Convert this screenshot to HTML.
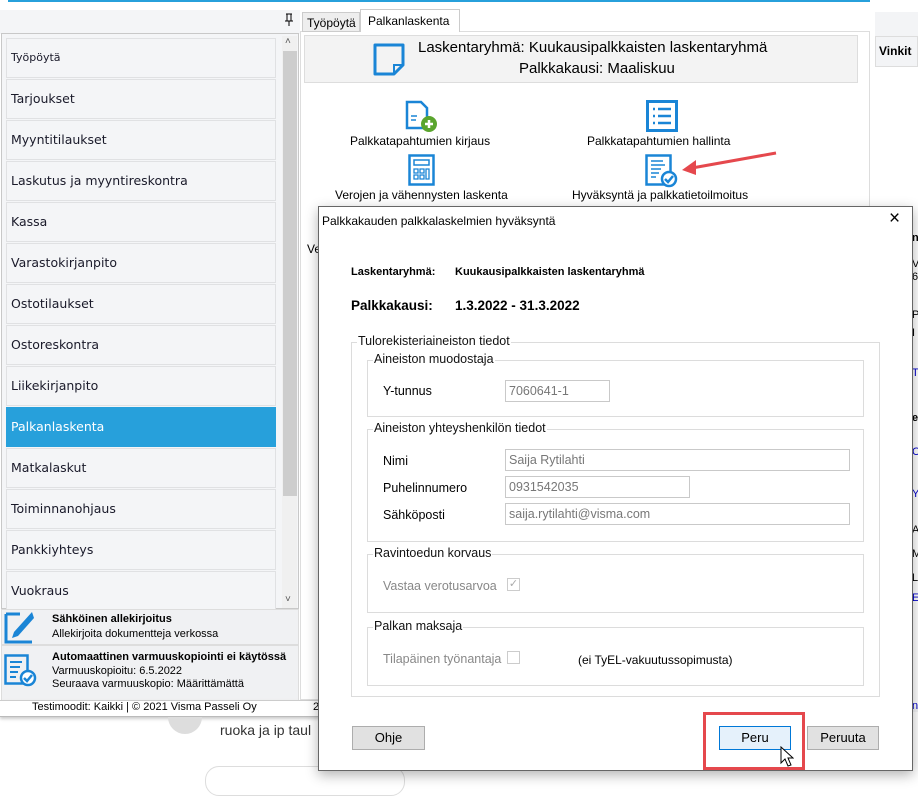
<!DOCTYPE html>
<html><head><meta charset="utf-8"><style>
*{box-sizing:border-box;margin:0;padding:0}
body{width:918px;height:776px;position:relative;overflow:hidden;background:#fff;font-family:"Liberation Sans",Arial,sans-serif;font-size:13px;color:#000}
.a{position:absolute}
.item{position:absolute;left:6px;width:270px;height:40px;background:#f4f5f7;border:1px solid #e0e1e3;font-family:"DejaVu Sans",sans-serif;font-size:12.5px;color:#1a1a2a;padding-left:4px;line-height:38px}
.sel{background:#27a0db;color:#fff;border-color:#27a0db}
fieldset{position:absolute;border:1px solid #dcdcdc;}
.lg{position:absolute;background:#fff;padding:0 1px;font-size:12.5px;color:#111}
.inp{position:absolute;border:1px solid #c9c9c9;height:22px;font-size:12.5px;color:#777;padding-left:3px;line-height:20px;background:#fff}
.btn{position:absolute;height:24px;background:#e1e1e1;border:1px solid #adadad;font-size:13px;text-align:center;line-height:22px}
</style></head><body>
<div class="a" style="left:8px;top:0;width:862px;height:2px;background:#27a0db"></div>
<!-- sidebar -->
<div class="a" style="left:0;top:10px;width:300px;height:24px;background:#f4f5f7"></div>
<svg class="a" style="left:284px;top:13px" width="10" height="14"><path d="M2 1h6M3 1v7M7 1v7M1 8h8M5 8v5" stroke="#000" stroke-width="1" fill="none"/></svg>
<div class="a" style="left:1px;top:33px;width:298px;height:576px;border:1px solid #c8c8c8;background:#f4f5f7"></div>
<div class="item" style="top:38px;font-size:11px">Työpöytä</div>
<div class="item" style="top:79px">Tarjoukset</div>
<div class="item" style="top:120px">Myyntitilaukset</div>
<div class="item" style="top:161px">Laskutus ja myyntireskontra</div>
<div class="item" style="top:202px">Kassa</div>
<div class="item" style="top:243px">Varastokirjanpito</div>
<div class="item" style="top:284px">Ostotilaukset</div>
<div class="item" style="top:325px">Ostoreskontra</div>
<div class="item" style="top:366px">Liikekirjanpito</div>
<div class="item sel" style="top:407px">Palkanlaskenta</div>
<div class="item" style="top:448px">Matkalaskut</div>
<div class="item" style="top:489px">Toiminnanohjaus</div>
<div class="item" style="top:530px">Pankkiyhteys</div>
<div class="item" style="top:571px">Vuokraus</div>
<div class="a" style="left:282px;top:36px;width:15px;height:572px;background:#f0f0f0"></div>
<div class="a" style="left:283px;top:51px;width:14px;height:445px;background:#cdcdcd"></div>
<div class="a" style="left:285px;top:36px;font-size:10px;color:#555">&#x2C4;</div>
<div class="a" style="left:285px;top:594px;font-size:10px;color:#555">&#x2C5;</div>
<div class="a" style="left:1px;top:609px;width:298px;height:36px;background:#f0f1f3;border:1px solid #ddd"></div>
<svg class="a" style="left:4px;top:610px" width="30" height="34"><path d="M2 4h14M2 4v28h26" stroke="#1a85d6" stroke-width="3" fill="none"/><path d="M28 2 L10 22 L8 28 L14 26 L30 8Z" fill="#1a85d6"/></svg>
<div class="a" style="left:52px;top:613px;font-size:11px;font-weight:bold">Sähköinen allekirjoitus</div>
<div class="a" style="left:52px;top:628px;font-size:11px">Allekirjoita dokumentteja verkossa</div>
<div class="a" style="left:1px;top:645px;width:298px;height:56px;background:#f0f1f3;border:1px solid #ddd"></div>
<svg class="a" style="left:4px;top:654px" width="34" height="34"><rect x="1.5" y="1.5" width="22" height="28" fill="none" stroke="#1a85d6" stroke-width="2.5"/><path d="M6 8h12M6 13h10M6 18h8M6 23h6" stroke="#1a85d6" stroke-width="2"/><circle cx="24" cy="24" r="7" fill="#fff" stroke="#1a85d6" stroke-width="2.5"/><path d="M20 24l3 3 5-6" stroke="#1a85d6" stroke-width="2.5" fill="none"/></svg>
<div class="a" style="left:52px;top:651px;font-size:11px;font-weight:bold">Automaattinen varmuuskopiointi ei käytössä</div>
<div class="a" style="left:52px;top:665px;font-size:11px">Varmuuskopioitu: 6.5.2022</div>
<div class="a" style="left:52px;top:678px;font-size:11px">Seuraava varmuuskopio: Määrittämättä</div>
<div class="a" style="left:0;top:700px;width:320px;height:17px;background:#fff;border-top:1px solid #ccc;border-bottom:1px solid #bbb;box-shadow:0 2px 3px #ccc"></div>
<div class="a" style="left:32px;top:701px;font-size:11px">Testimoodit: Kaikki | © 2021 Visma Passeli Oy</div>
<div class="a" style="left:313px;top:701px;font-size:11px">2</div>
<div class="a" style="left:168px;top:717px;width:34px;height:17px;border-radius:0 0 17px 17px;background:#ddd"></div>
<div class="a" style="left:220px;top:722px;font-size:14px;color:#333">ruoka ja ip taul</div>
<div class="a" style="left:205px;top:766px;width:200px;height:30px;border:1px solid #ddd;border-radius:14px"></div>
<!-- main -->
<div class="a" style="left:300px;top:31px;width:570px;height:669px;border:1px solid #ddd;background:#fff"></div>
<div class="a" style="left:302px;top:12px;width:58px;height:20px;background:#eee;border:1px solid #ccc;font-size:12px;padding:3px 4px">Työpöytä</div>
<div class="a" style="left:360px;top:9px;width:100px;height:23px;background:#fff;border:1px solid #ccc;border-bottom:none;font-size:12px;padding:4px 7px">Palkanlaskenta</div>
<div class="a" style="left:304px;top:35px;width:554px;height:48px;background:#f3f3f3;border:1px solid #ddd"></div>
<svg class="a" style="left:372px;top:42px" width="36" height="34"><path d="M3 3h28v20l-9 9H3Z" fill="none" stroke="#1a85d6" stroke-width="3" stroke-linejoin="round"/><path d="M31 23h-9v9" fill="none" stroke="#1a85d6" stroke-width="2"/></svg>
<div class="a" style="left:418px;top:39px;font-size:15px">Laskentaryhmä: Kuukausipalkkaisten laskentaryhmä</div>
<div class="a" style="left:519px;top:60px;font-size:15px">Palkkakausi: Maaliskuu</div>
<svg class="a" style="left:405px;top:100px" width="34" height="34"><path d="M2 2h14l6 6v20H2Z" fill="none" stroke="#1a85d6" stroke-width="2.5"/><path d="M6 16h6M6 20h5" stroke="#1a85d6" stroke-width="1.5"/><circle cx="24" cy="24" r="8" fill="#5aa52e"/><path d="M20 24h8M24 20v8" stroke="#fff" stroke-width="2.5"/></svg>
<div class="a" style="left:350px;top:134px;font-size:12px">Palkkatapahtumien kirjaus</div>
<svg class="a" style="left:646px;top:100px" width="34" height="34"><rect x="1.5" y="1.5" width="29" height="29" fill="none" stroke="#1a85d6" stroke-width="3"/><path d="M7 9h2M12 9h13M7 16h2M12 16h13M7 23h2M12 23h13" stroke="#1a85d6" stroke-width="2.5"/></svg>
<div class="a" style="left:587px;top:134px;font-size:12px">Palkkatapahtumien hallinta</div>
<svg class="a" style="left:408px;top:154px" width="30" height="34"><rect x="1.5" y="1.5" width="24" height="29" fill="none" stroke="#1a85d6" stroke-width="2.5"/><rect x="6" y="6" width="15" height="5" fill="none" stroke="#1a85d6" stroke-width="1.5"/><path d="M6 15h4v4H6zM12 15h4v4h-4zM18 15h3v10h-3zM6 21h4v4H6zM12 21h4v4h-4z" fill="none" stroke="#1a85d6" stroke-width="1.3"/></svg>
<div class="a" style="left:335px;top:188px;font-size:12px">Verojen ja vähennysten laskenta</div>
<svg class="a" style="left:645px;top:154px" width="34" height="34"><rect x="1.5" y="1.5" width="24" height="29" fill="#fff" stroke="#1a85d6" stroke-width="2.5"/><path d="M6 7h12M6 11h14M6 15h10M6 19h8M6 23h5" stroke="#1a85d6" stroke-width="1.5"/><circle cx="24" cy="25" r="7" fill="#fff" stroke="#1a85d6" stroke-width="2.5"/><path d="M20 25l3 3 5-6" stroke="#1a85d6" stroke-width="2.5" fill="none"/></svg>
<svg class="a" style="left:680px;top:148px" width="100" height="30"><path d="M96 5 L12 20" stroke="#e5484d" stroke-width="3"/><path d="M2 22 L16 12 L16 27Z" fill="#e5484d"/></svg>
<div class="a" style="left:572px;top:188px;font-size:12px">Hyväksyntä ja palkkatietoilmoitus</div>
<div class="a" style="left:307px;top:242px;font-size:12px">Ve</div>
<!-- right -->
<div class="a" style="left:875px;top:12px;width:43px;height:700px;background:#f3f4f6"></div>
<div class="a" style="left:875px;top:36px;width:43px;height:31px;border:1px solid #ddd;background:#f3f4f6;font-weight:bold;font-size:12px;padding:7px 3px">Vinkit</div>
<div class="a" style="left:875px;top:67px;width:43px;height:640px;background:#fff"></div>
<div class="a" style="left:912px;top:232px;font-size:11px;font-weight:bold">n</div>
<div class="a" style="left:912px;top:258px;font-size:11px;line-height:13px">V<br>6</div>
<div class="a" style="left:912px;top:306px;font-size:11px;line-height:18px">P<br>I</div>
<div class="a" style="left:912px;top:367px;font-size:11px;color:#00c">T</div>
<div class="a" style="left:912px;top:412px;font-size:11px;font-weight:bold">e</div>
<div class="a" style="left:912px;top:446px;font-size:11px;color:#00c">C</div>
<div class="a" style="left:912px;top:488px;font-size:11px;color:#00c">Y</div>
<div class="a" style="left:912px;top:518px;font-size:11px;line-height:24px">A<br>M<br>L</div>
<div class="a" style="left:912px;top:592px;font-size:11px;color:#00c">E</div>
<div class="a" style="left:912px;top:700px;font-size:11px;color:#00c">n</div>
<!-- dialog -->
<div class="a" style="left:318px;top:206px;width:595px;height:565px;background:#fff;border:1px solid #666;box-shadow:0 4px 12px rgba(0,0,0,.3)"></div>
<div class="a" style="left:322px;top:214px;font-size:12px">Palkkakauden palkkalaskelmien hyväksyntä</div>
<div class="a" style="left:889px;top:208px;font-size:19px;font-weight:300">×</div>
<div class="a" style="left:351px;top:266px;font-size:11px;font-weight:bold">Laskentaryhmä:</div>
<div class="a" style="left:455px;top:266px;font-size:11px;font-weight:bold">Kuukausipalkkaisten laskentaryhmä</div>
<div class="a" style="left:351px;top:298px;font-size:13.5px;font-weight:bold">Palkkakausi:</div>
<div class="a" style="left:455px;top:298px;font-size:13.5px;font-weight:bold">1.3.2022 - 31.3.2022</div>
<fieldset style="left:351px;top:342px;width:529px;height:355px"></fieldset>
<div class="lg" style="left:357px;top:334px">Tulorekisteriaineiston tiedot</div>
<fieldset style="left:367px;top:360px;width:497px;height:57px"></fieldset>
<div class="lg" style="left:373px;top:352px">Aineiston muodostaja</div>
<div class="a" style="left:383px;top:384px;font-size:12.5px">Y-tunnus</div>
<div class="inp" style="left:505px;top:380px;width:105px">7060641-1</div>
<fieldset style="left:367px;top:429px;width:497px;height:113px"></fieldset>
<div class="lg" style="left:373px;top:421px">Aineiston yhteyshenkilön tiedot</div>
<div class="a" style="left:383px;top:454px;font-size:12.5px">Nimi</div>
<div class="inp" style="left:505px;top:449px;width:345px">Saija Rytilahti</div>
<div class="a" style="left:383px;top:481px;font-size:12.5px">Puhelinnumero</div>
<div class="inp" style="left:505px;top:476px;width:185px">0931542035</div>
<div class="a" style="left:383px;top:508px;font-size:12.5px">Sähköposti</div>
<div class="inp" style="left:505px;top:503px;width:345px">saija.rytilahti@visma.com</div>
<fieldset style="left:367px;top:554px;width:497px;height:59px"></fieldset>
<div class="lg" style="left:373px;top:546px">Ravintoedun korvaus</div>
<div class="a" style="left:383px;top:579px;font-size:12.5px;color:#888">Vastaa verotusarvoa</div>
<div class="a" style="left:507px;top:578px;width:13px;height:13px;border:1px solid #ccc;font-size:11px;color:#aaa;line-height:11px;text-align:center">✓</div>
<fieldset style="left:367px;top:627px;width:497px;height:59px"></fieldset>
<div class="lg" style="left:373px;top:619px">Palkan maksaja</div>
<div class="a" style="left:383px;top:652px;font-size:12.5px;color:#888">Tilapäinen työnantaja</div>
<div class="a" style="left:507px;top:651px;width:13px;height:13px;border:1px solid #ccc"></div>
<div class="a" style="left:578px;top:653px;font-size:12px">(ei TyEL-vakuutussopimusta)</div>
<div class="btn" style="left:352px;top:726px;width:73px">Ohje</div>
<div class="a" style="left:703px;top:712px;width:102px;height:58px;border:3px solid #e5484d"></div>
<div class="btn" style="left:719px;top:726px;width:72px;background:#e5f1fb;border-color:#0078d7">Peru</div>
<div class="btn" style="left:807px;top:726px;width:72px">Peruuta</div>
<svg class="a" style="left:780px;top:746px" width="14" height="22"><path d="M1 1v16l4-4 3 7 3-1-3-7h5Z" fill="#fff" stroke="#000" stroke-width="1"/></svg>
</body></html>
